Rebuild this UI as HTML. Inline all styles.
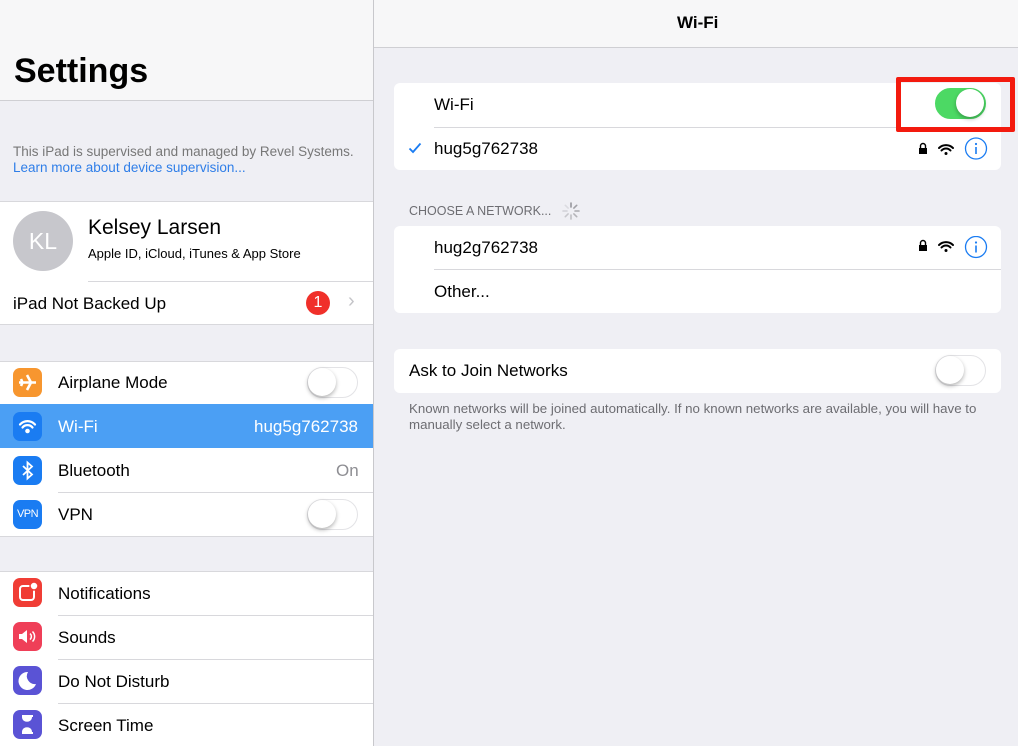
<!DOCTYPE html>
<html><head><meta charset="utf-8"><style>
*{margin:0;padding:0;box-sizing:border-box}
body{width:1018px;height:746px;overflow:hidden;background:#efeff4;font-family:"Liberation Sans",sans-serif;position:relative;color:#000}
.a{position:absolute}
.t{position:absolute;white-space:nowrap}
.w{background:#fff}
.ic{position:absolute;left:13px;width:29px;height:29px;border-radius:7px}
.sep{position:absolute;height:1px;background:#d8d8dc}
.sw{position:absolute;width:51px;height:31px;border-radius:16px;border:1.5px solid #e3e3e6;background:#fff}
.sw::after{content:"";position:absolute;left:0;top:0;width:28px;height:28px;border-radius:50%;background:#fff;box-shadow:0 2px 4px rgba(0,0,0,.3)}
.on{background:#4cd964;border-color:#4cd964}
.on::after{left:20px}
.r{font-size:17px}
</style></head><body>
<div class="a" style="left:0;top:0;width:373px;height:746px;background:#efeff4"></div>
<div class="a" style="left:0;top:0;width:373px;height:100px;background:#f7f7f8"></div>
<div class="sep" style="left:0;top:100px;width:373px;background:#cfcfd3"></div>
<div class="t" style="left:14px;top:52px;font-size:34px;font-weight:bold">Settings</div>
<div class="t" style="left:13px;top:144px;font-size:13.5px;color:#777">This iPad is supervised and managed by Revel Systems.</div>
<div class="t" style="left:13px;top:160px;font-size:13.5px;color:#2f7ee8">Learn more about device supervision...</div>
<div class="a w" style="left:0;top:201px;width:373px;height:124px;border-top:1px solid #d8d8dc;border-bottom:1px solid #d8d8dc"></div>
<div class="a" style="left:13px;top:211px;width:60px;height:60px;border-radius:50%;background:#c7c7cc;color:#fff;font-size:23px;text-align:center;line-height:60px">KL</div>
<div class="t" style="left:88px;top:216px;font-size:21px">Kelsey Larsen</div>
<div class="t" style="left:88px;top:246px;font-size:13px">Apple ID, iCloud, iTunes &amp; App Store</div>
<div class="sep" style="left:88px;top:281px;width:285px"></div>
<div class="t r" style="left:13px;top:294px">iPad Not Backed Up</div>
<div class="a" style="left:306px;top:291px;width:24px;height:24px;border-radius:50%;background:#f0302a;color:#fff;font-size:16px;text-align:center;line-height:24px">1</div>
<div class="t" style="left:348px;top:290px;color:#c4c4c8;font-size:20px">›</div>

<div class="a w" style="left:0;top:361px;width:373px;height:176px;border-top:1px solid #d8d8dc;border-bottom:1px solid #d8d8dc"></div>
<div class="ic" style="top:368px;background:#f7962f"><svg width="29" height="29" viewBox="0 0 29 29"><path d="M6 14.5h17M14 7l4 7.5-4 7.5M8 11l1.5 3.5L8 18" stroke="#fff" stroke-width="2.6" fill="none" stroke-linejoin="round"/></svg></div>
<div class="t r" style="left:58px;top:373px">Airplane Mode</div>
<div class="sw" style="left:307px;top:367px"></div>
<div class="a" style="left:0;top:404px;width:373px;height:44px;background:#4b9ff4"></div>
<div class="ic" style="top:412px;background:#1a7cf2"><svg width="29" height="29" viewBox="0 0 29 29" fill="none" stroke="#fff" stroke-width="2.2" stroke-linecap="round"><path d="M7 12.5a10 10 0 0 1 15 0M9.5 15.5a6.5 6.5 0 0 1 10 0"/><circle cx="14.5" cy="19" r="1.2" fill="#fff"/></svg></div>
<div class="t r" style="left:58px;top:417px;color:#fff">Wi-Fi</div>
<div class="t r" style="left:254px;top:417px;color:#fff">hug5g762738</div>
<div class="ic" style="top:456px;background:#1a7cf2"><svg width="29" height="29" viewBox="0 0 29 29" fill="none" stroke="#fff" stroke-width="1.8"><path d="M10 10l9 8.5-4.5 4V6.5l4.5 4L10 19"/></svg></div>
<div class="t r" style="left:58px;top:461px">Bluetooth</div>
<div class="t r" style="left:336px;top:461px;color:#8e8e93">On</div>
<div class="sep" style="left:58px;top:492px;width:315px"></div>
<div class="ic" style="top:500px;background:#1a7cf2;color:#fff;font-size:11px;line-height:29px;text-align:center;letter-spacing:-.5px">VPN</div>
<div class="t r" style="left:58px;top:505px">VPN</div>
<div class="sw" style="left:307px;top:499px"></div>

<div class="a w" style="left:0;top:571px;width:373px;height:175px;border-top:1px solid #d8d8dc"></div>
<div class="ic" style="top:578px;background:#f03d35"><svg width="29" height="29" viewBox="0 0 29 29"><rect x="7" y="8" width="14" height="14" rx="3" fill="none" stroke="#fff" stroke-width="2"/><circle cx="21" cy="8" r="4" fill="#fff" stroke="#f03d35" stroke-width="1.5"/></svg></div>
<div class="t r" style="left:58px;top:584px">Notifications</div>
<div class="sep" style="left:58px;top:615px;width:315px"></div>
<div class="ic" style="top:622px;background:#ef3f58"><svg width="29" height="29" viewBox="0 0 29 29"><path d="M6 12h3l5-4v13l-5-4H6z" fill="#fff"/><path d="M17 11.5a4 4 0 0 1 0 6M19.5 9.5a7 7 0 0 1 0 10" stroke="#fff" stroke-width="1.5" fill="none"/></svg></div>
<div class="t r" style="left:58px;top:628px">Sounds</div>
<div class="sep" style="left:58px;top:659px;width:315px"></div>
<div class="ic" style="top:666px;background:#5a53d5"><svg width="29" height="29" viewBox="0 0 29 29"><path d="M15 6a9 9 0 1 0 8 12A8 8 0 0 1 15 6z" fill="#fff"/></svg></div>
<div class="t r" style="left:58px;top:672px">Do Not Disturb</div>
<div class="sep" style="left:58px;top:703px;width:315px"></div>
<div class="ic" style="top:710px;background:#5a53d5"><svg width="29" height="29" viewBox="0 0 29 29"><path d="M9 6h11M9 23h11M10 7c0 5 8 5 8 0M10 22c0-5 8-5 8 0" stroke="#fff" stroke-width="2" fill="#fff"/></svg></div>
<div class="t r" style="left:58px;top:716px">Screen Time</div>
<div class="a" style="left:373px;top:0;width:1px;height:746px;background:#c8c8cc"></div>

<div class="a" style="left:374px;top:0;width:644px;height:48px;background:#f7f7f8;border-bottom:1px solid #cfcfd3"></div>
<div class="t" style="left:677px;top:13px;font-size:17px;font-weight:bold">Wi-Fi</div>
<div class="a w" style="left:394px;top:83px;width:607px;height:87px;border-radius:6px"></div>
<div class="t r" style="left:434px;top:95px">Wi-Fi</div>
<div class="sw on" style="left:935px;top:88px"></div>
<div class="sep" style="left:434px;top:127px;width:567px"></div>
<svg class="a" style="left:408px;top:142px" width="14" height="12" viewBox="0 0 14 12"><path d="M1.5 6.5l3.5 3.5L12.5 1.5" stroke="#1a7cf2" stroke-width="1.8" fill="none"/></svg>
<div class="t r" style="left:434px;top:139px">hug5g762738</div>
<svg class="a" style="left:915px;top:137px" width="75" height="23" viewBox="0 0 75 23"><rect x="4" y="11" width="8" height="6" fill="#000"/><path d="M5.5 11V9a2.5 2.5 0 0 1 5 0v2" stroke="#000" stroke-width="1.4" fill="none"/><path d="M24 11a10 10 0 0 1 14 0M26.5 13.5a6 6 0 0 1 9 0" stroke="#000" stroke-width="2" fill="none" stroke-linecap="round"/><circle cx="31" cy="16.5" r="1.5"/><circle cx="61" cy="11.5" r="10.5" fill="none" stroke="#1a7cf2" stroke-width="1.3"/><circle cx="61" cy="7" r="1.1" fill="#1a7cf2"/><rect x="60.2" y="10" width="1.6" height="7" fill="#1a7cf2"/></svg>
<div class="t" style="left:409px;top:204px;font-size:12.5px;color:#6d6d72">CHOOSE A NETWORK...</div>
<svg class="a" style="left:561px;top:201px" width="20" height="20" viewBox="0 0 20 20" stroke-width="1.6" stroke-linecap="round"><g stroke="#8e8e93"><path d="M10 2v4" opacity=".9"/><path d="M15.7 4.3l-2.8 2.8" opacity=".8"/><path d="M18 10h-4" opacity=".7"/><path d="M15.7 15.7l-2.8-2.8" opacity=".6"/><path d="M10 18v-4" opacity=".5"/><path d="M4.3 15.7l2.8-2.8" opacity=".4"/><path d="M2 10h4" opacity=".3"/><path d="M4.3 4.3l2.8 2.8" opacity=".2"/></g></svg>
<div class="a w" style="left:394px;top:226px;width:607px;height:87px;border-radius:6px"></div>
<div class="t r" style="left:434px;top:238px">hug2g762738</div>
<svg class="a" style="left:915px;top:236px" width="75" height="23" viewBox="0 0 75 23"><rect x="4" y="9" width="8" height="6" fill="#000"/><path d="M5.5 9V7a2.5 2.5 0 0 1 5 0v2" stroke="#000" stroke-width="1.4" fill="none"/><path d="M24 9a10 10 0 0 1 14 0M26.5 11.5a6 6 0 0 1 9 0" stroke="#000" stroke-width="2" fill="none" stroke-linecap="round"/><circle cx="31" cy="14.5" r="1.5"/><circle cx="61" cy="11" r="10.5" fill="none" stroke="#1a7cf2" stroke-width="1.3"/><circle cx="61" cy="6.5" r="1.1" fill="#1a7cf2"/><rect x="60.2" y="9.5" width="1.6" height="7" fill="#1a7cf2"/></svg>
<div class="sep" style="left:434px;top:269px;width:567px"></div>
<div class="t r" style="left:434px;top:282px">Other...</div>
<div class="a w" style="left:394px;top:349px;width:607px;height:44px;border-radius:6px"></div>
<div class="t r" style="left:409px;top:361px">Ask to Join Networks</div>
<div class="sw" style="left:935px;top:355px"></div>
<div class="t" style="left:409px;top:401px;font-size:13.3px;color:#6d6d72;line-height:16px">Known networks will be joined automatically. If no known networks are available, you will have to<br>manually select a network.</div>

<div class="a" style="left:896px;top:77px;width:119px;height:55px;border:5px solid #f31a0e;border-radius:2px"></div>
</body></html>
